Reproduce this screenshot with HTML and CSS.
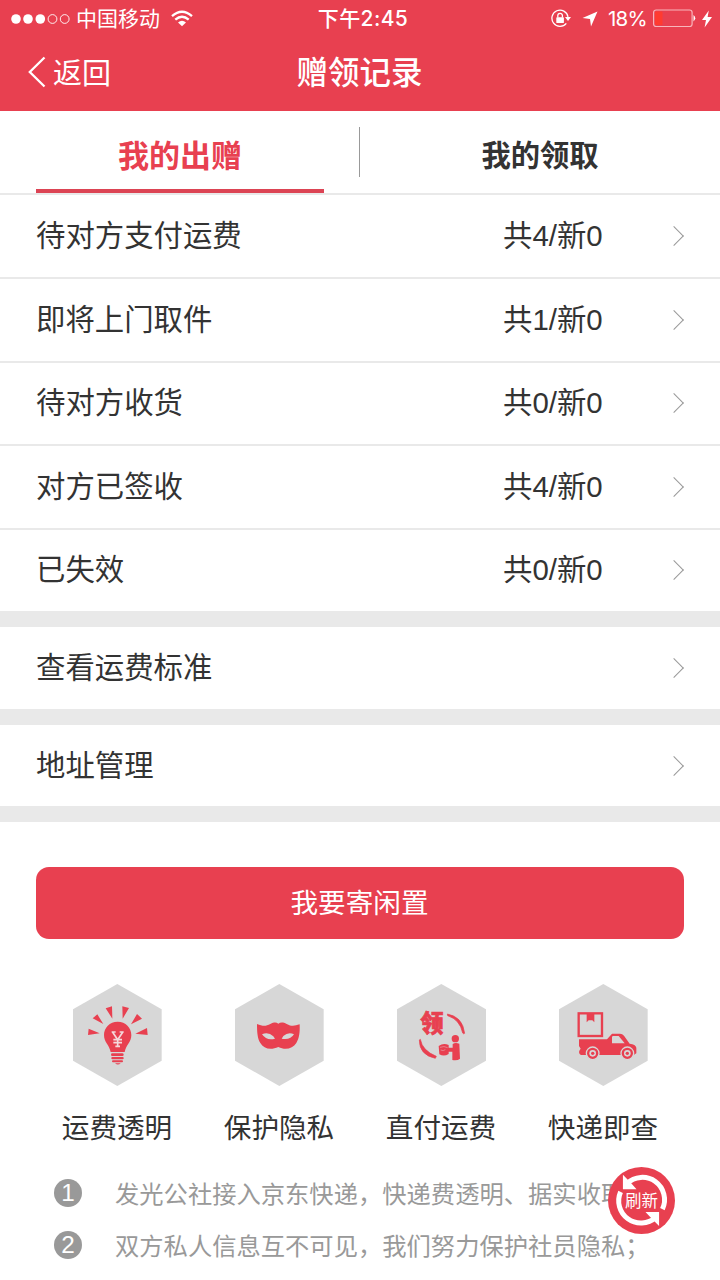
FILE: index.html
```html
<!DOCTYPE html>
<html lang="zh-CN">
<head>
  <meta charset="UTF-8" />
  <meta name="viewport" content="width=device-width, initial-scale=1" />
  <title>赠领记录</title>
  <link rel="stylesheet" href="styles.css">
</head>
<body>

<div class="page">
  <header class="header">
    <div class="status">
      <div class="status-left">
        <svg class="signal" width="60" height="12" viewBox="0 0 60 12">
          <g fill="#fff"><circle cx="5" cy="6" r="4.8"/><circle cx="17" cy="6" r="4.8"/><circle cx="29.3" cy="6" r="4.8"/></g>
          <g fill="none" stroke="#fff" stroke-width="0.9"><circle cx="41.5" cy="6" r="4.4"/><circle cx="53.7" cy="6" r="4.4"/></g>
        </svg>
        <span class="carrier">中国移动</span>
        <svg class="wifi" width="22" height="17" viewBox="0 0 22 17" fill="none" stroke="#fff" stroke-width="2.3">
          <path d="M1 6.2Q11-2.8 21 6.2M4.3 9.7Q11 3.7 17.7 9.7"/>
          <path d="M11 16.2L7 12.5Q11 8.9 15 12.5Z" fill="#fff" stroke="none"/>
        </svg>
      </div>
      <div class="time">下午2:45</div>
      <div class="status-right">
        <svg width="20" height="19" viewBox="0 0 20 19" fill="none" stroke="#fff" stroke-width="1.3">
          <path d="M15.3 14.3A8.1 8.1 0 1 1 17 7.8"/>
          <path d="M14 8h6l-3 4z" fill="#fff" stroke="none"/>
          <rect x="5.3" y="8.3" width="7.6" height="5.8" rx=".7" fill="#fff" stroke="none"/>
          <path d="M6.8 8.5V6.6a2.3 2.3 0 0 1 4.6 0v1.9"/>
        </svg>
        <svg class="arrow" width="16" height="16" viewBox="0 0 16 16"><path d="M15.5.5L9 15.5 8 8 .5 7z" fill="#fff"/></svg>
        <span class="percent">18%</span>
        <svg width="43" height="19" viewBox="0 0 43 19">
          <rect x=".6" y="1" width="38.5" height="16.5" rx="2.5" fill="none" stroke="#f8b5bb" stroke-width="1.2"/>
          <rect x="2" y="2.4" width="7.5" height="13.7" rx="1" fill="#ff3b30"/>
          <path d="M40.5 6q3.500 3.200 0 6.400z" fill="#fff"/>
        </svg>
        <svg class="bolt" width="10" height="18" viewBox="0 0 10 18"><path d="M6.8.5L0 10h4L2.6 17.5 10 7H5.6z" fill="#fff"/></svg>
      </div>
    </div>
    <div class="navbar">
      <div class="back">
        <svg width="18" height="32" viewBox="0 0 18 32"><path d="M16.5 1.5L1.8 16l14.7 14.5" fill="none" stroke="#fff" stroke-width="2.3"/></svg>
        <span>返回</span>
      </div>
      <h1 class="title">赠领记录</h1>
    </div>
  </header>

  <nav class="tabs">
    <div class="tab active"><span>我的出赠</span></div>
    <div class="divider"></div>
    <div class="tab"><span>我的领取</span></div>
  </nav>

  <ul class="list">
    <li class="row"><span class="name">待对方支付运费</span><span class="count">共4/新0</span><i class="chevron"></i></li>
    <li class="row"><span class="name">即将上门取件</span><span class="count">共1/新0</span><i class="chevron"></i></li>
    <li class="row"><span class="name">待对方收货</span><span class="count">共0/新0</span><i class="chevron"></i></li>
    <li class="row"><span class="name">对方已签收</span><span class="count">共4/新0</span><i class="chevron"></i></li>
    <li class="row"><span class="name">已失效</span><span class="count">共0/新0</span><i class="chevron"></i></li>
  </ul>
  <div class="row single"><span class="name">查看运费标准</span><i class="chevron"></i></div>
  <div class="row single last"><span class="name">地址管理</span><i class="chevron"></i></div>

  <button class="send">我要寄闲置</button>

  <div class="features">
    <div class="feature">
      <svg class="hex" viewBox="38 28 267 306">
        <path d="M171 28L304 104V258L171 334 38 258V104Z" fill="#d7d7d7"/>
        <g fill="#e84050">
          <path d="M172 141c-24 0-41 18-41 40 0 23 16 28 20 51h42c4-23 20-28 20-51 0-22-17-40-41-40z"/>
          <rect x="152" y="236" width="38" height="8" rx="4"/>
          <rect x="153" y="247" width="37" height="7" rx="3"/>
          <rect x="155" y="257" width="33" height="6" rx="3"/>
          <path d="M164 266h17q-8 7-17 0z"/>
          <path d="M85 162l33 14-35 5zM97 131l14-12 18 29zM136 101l19-6 1 37zM186 95l20 5-19 32zM230 118l15 14-33 17zM260 160l2 21-37-4z"/>
        </g>
        <path d="M157 173l15 22 15-22M172 194v21M159 195h26M159 204h26M154 172h12M178 172h12M165 215h14" fill="none" stroke="#f4d9dc" stroke-width="5"/>
      </svg>
      <span>运费透明</span>
    </div>
    <div class="feature">
      <svg class="hex" viewBox="45 26 267 306">
        <path d="M178 26L311 102V256L178 332 45 256V102Z" fill="#d7d7d7"/>
        <path d="M111 146c16 6 25 8 40 0 12-6 18-5 24-1 6-4 14-5 25 1 15 8 24 6 39 1 1 24-1 42-10 56-11 18-34 22-54 12-22 10-44 6-54-12-9-14-10-34-10-57z" fill="#e84050"/>
        <path d="M126 177q19-8 34 6l5 7q-25 7-39-13zM222 177q-17-8-32 5l-5 8q26 5 37-13z" fill="#d7d7d7"/>
      </svg>
      <span>保护隐私</span>
    </div>
    <div class="feature">
      <svg class="hex" viewBox="49 26 267 306">
        <path d="M182 26L316 102V256L182 332 49 256V102Z" fill="#d7d7d7"/>
        <text class="ling" x="119" y="169">领</text>
        <g fill="#e84050">
          <path d="M200 116q46 8 52 58-4 3-6-1-8-40-45-52zM119 192q6 34 48 51l-3 6q-48-10-48-55z" stroke="#e84050" stroke-width="2"/>
          <circle cx="224" cy="190" r="11"/>
          <path d="M216 206q8-6 20-1l2 45q-8 7-23 4v-25h-11v7q-14 9-28 1l-2-25q14-10 30-3v8h12z"/>
        </g>
        <path d="M178 216q12-5 23 1M180 224q8 4 14-1" fill="none" stroke="#e6a1a8" stroke-width="2"/>
      </svg>
      <span>直付运费</span>
    </div>
    <div class="feature">
      <svg class="hex" viewBox="41 28 267 306">
        <path d="M174 28L307 104V258L174 334 41 258V104Z" fill="#d7d7d7"/>
        <rect x="100" y="116" width="70" height="68" fill="none" stroke="#e84050" stroke-width="7"/>
        <path d="M124 118h23v25l-6-6h-11l-6 6z" fill="#e84050"/>
        <path d="M101 194h84l15-17h24q7 0 12 6l17 24q18 2 20 12v17l-8 5H107q-8-5-5-13l4-6-5-8z" fill="#e84050"/>
        <path d="M202 184h18l18 22h-38v-20z" fill="#d7d7d7"/>
        <g fill="#e84050" stroke="#d7d7d7" stroke-width="4"><circle cx="142" cy="236" r="19"/><circle cx="246" cy="236" r="19"/></g>
        <g fill="#d7d7d7"><circle cx="142" cy="236" r="10"/><circle cx="246" cy="236" r="10"/></g>
        <g fill="#e84050"><circle cx="142" cy="236" r="5"/><circle cx="246" cy="236" r="5"/></g>
      </svg>
      <span>快递即查</span>
    </div>
  </div>

  <ol class="notes">
    <li><b>1</b><span>发光公社接入京东快递，快递费透明、据实收取；</span></li>
    <li><b>2</b><span>双方私人信息互不可见，我们努力保护社员隐私；</span></li>
  </ol>

  <!-- floating refresh button -->
  <div class="refresh">
    <svg viewBox="54 52 202 202">
      <circle cx="155" cy="153" r="101" fill="#e84050"/>
      <g fill="none" stroke="#fff" stroke-width="15">
        <path d="M92 127A67 67 0 0 0 198 204"/>
        <path d="M111 102A67 67 0 0 1 218 179"/>
      </g>
      <path d="M99 75V119H140L124 101ZM167 188H208V230L184 206Z" fill="#fff"/>
    </svg>
    <span>刷新</span>
  </div>
</div>

</body>
</html>
```
FILE: styles.css
```css
* {
  box-sizing: border-box;
}

body {
  margin: 0;
  font-family: "Liberation Sans", "Noto Sans CJK SC", sans-serif;
  color: #333;
  background-color: #fff;
}

svg {
  display: block;
  flex-shrink: 0;
}

.page {
  position: relative;
  width: 720px;
  height: 1280px;
  overflow: hidden;
}

.header {
  height: 111px;
  background-color: #e84050;
  color: #fff;
}

.status {
  display: grid;
  grid-template-columns: 1fr auto 1fr;
  align-items: center;
  height: 36px;
  padding: 0 8px 0 11px;
  font-size: 21px;
  line-height: 36px;
}

.status-left,
.status-right {
  display: flex;
  align-items: center;
}

.status-left {
  padding-top: 1px;
}

.status-right {
  justify-content: flex-end;
}

.carrier {
  margin: 0 11px 0 5px;
}

.wifi {
  margin-bottom: 2px;
}

.time {
  padding: 1px 0 0 3px;
  font-family: Inter, "Noto Sans CJK SC", sans-serif;
  font-weight: 500;
  letter-spacing: 0.4px;
}

.arrow {
  margin: 0 10px 0 11px;
}

.percent {
  padding-top: 1px;
  font-family: Inter, sans-serif;
  font-size: 20.5px;
  letter-spacing: -0.7px;
  margin-right: 6px;
}

.bolt {
  margin-left: 6px;
}

.navbar {
  display: grid;
  grid-template-columns: 1fr auto 1fr;
  align-items: center;
  height: 75px;
  padding: 0 28px;
}

.back {
  display: flex;
  align-items: center;
  gap: 7px;
  font-size: 29px;
  line-height: 71px;
}

.back span {
  padding-top: 1px;
}

.back svg {
  margin-bottom: 3px;
}

.title {
  margin: 0 1px 0 0;
  font-size: 31.5px;
  font-weight: 500;
  line-height: 73px;
}

.tabs {
  display: flex;
  height: 84px;
  padding: 0 36px;
  border-bottom: 2px solid #e9e9e9;
}

.tab {
  flex: 1;
  height: 82px;
  text-align: center;
  font-size: 29.3px;
  font-weight: bold;
  line-height: 90px;
}

.tab.active {
  font-size: 31px;
  line-height: 92px;
  color: #e84050;
  border-bottom: 4px solid #dc4454;
  margin-right: 35px;
}

.divider {
  width: 1px;
  height: 50px;
  margin: 16px 36px 0 0;
  background-color: #999;
}

.list {
  margin: 0;
  padding: 0;
  list-style: none;
  border-bottom: 16px solid #e9e9e9;
}

.row {
  display: flex;
  align-items: center;
  height: 82px;
  padding: 0 36px;
  font-size: 29.4px;
  line-height: 82px;
}

.list .row + .row {
  height: 83.5px;
  border-top: 2px solid #e9e9e9;
}

.name {
  flex: 1;
}

.count {
  width: 99px;
  margin-right: 68px;
  text-align: right;
  white-space: nowrap;
}

.chevron {
  width: 14px;
  height: 14px;
  border-top: 1.5px solid #999;
  border-right: 1.5px solid #999;
  transform: translateX(-3px) rotate(45deg);
}

.row.single {
  height: 98px;
  border-bottom: 16px solid #e9e9e9;
}

.row.single.last {
  height: 97px;
}

.send {
  display: block;
  width: 648px;
  height: 72px;
  margin: 45px 36px 0;
  padding: 1px 1px 0 0;
  border: none;
  border-radius: 13px;
  background-color: #e84050;
  color: #fff;
  font-family: inherit;
  font-size: 27.6px;
  line-height: 71px;
}

.features {
  display: grid;
  grid-template-columns: repeat(4, 1fr);
  padding: 45px 36px 0;
}

.feature {
  display: flex;
  flex-direction: column;
  align-items: center;
  font-size: 27.6px;
  line-height: 40px;
}

.hex {
  width: 89px;
  height: 102px;
  margin-bottom: 23px;
}

.ling {
  font-size: 70px;
  font-weight: 900;
  fill: #e84050;
  stroke: #e84050;
  stroke-width: 2px;
}

.notes {
  margin: 0;
  padding: 18px 0 0 54px;
  list-style: none;
  color: #999;
}

.notes li {
  display: flex;
  align-items: center;
  gap: 33px;
  height: 52px;
  font-size: 24.3px;
  white-space: nowrap;
}

.notes li span {
  padding-bottom: 2px;
}

.notes b {
  width: 28px;
  height: 28px;
  border-radius: 50%;
  background-color: #999;
  color: #fff;
  font-weight: normal;
  line-height: 28px;
  text-align: center;
}

.refresh {
  position: absolute;
  left: 608px;
  top: 1167px;
  width: 67px;
  height: 67px;
  color: #fff;
}

.refresh span {
  position: absolute;
  left: 0;
  top: 17px;
  width: 100%;
  text-align: center;
  font-size: 16.5px;
  line-height: 34px;
}
```
